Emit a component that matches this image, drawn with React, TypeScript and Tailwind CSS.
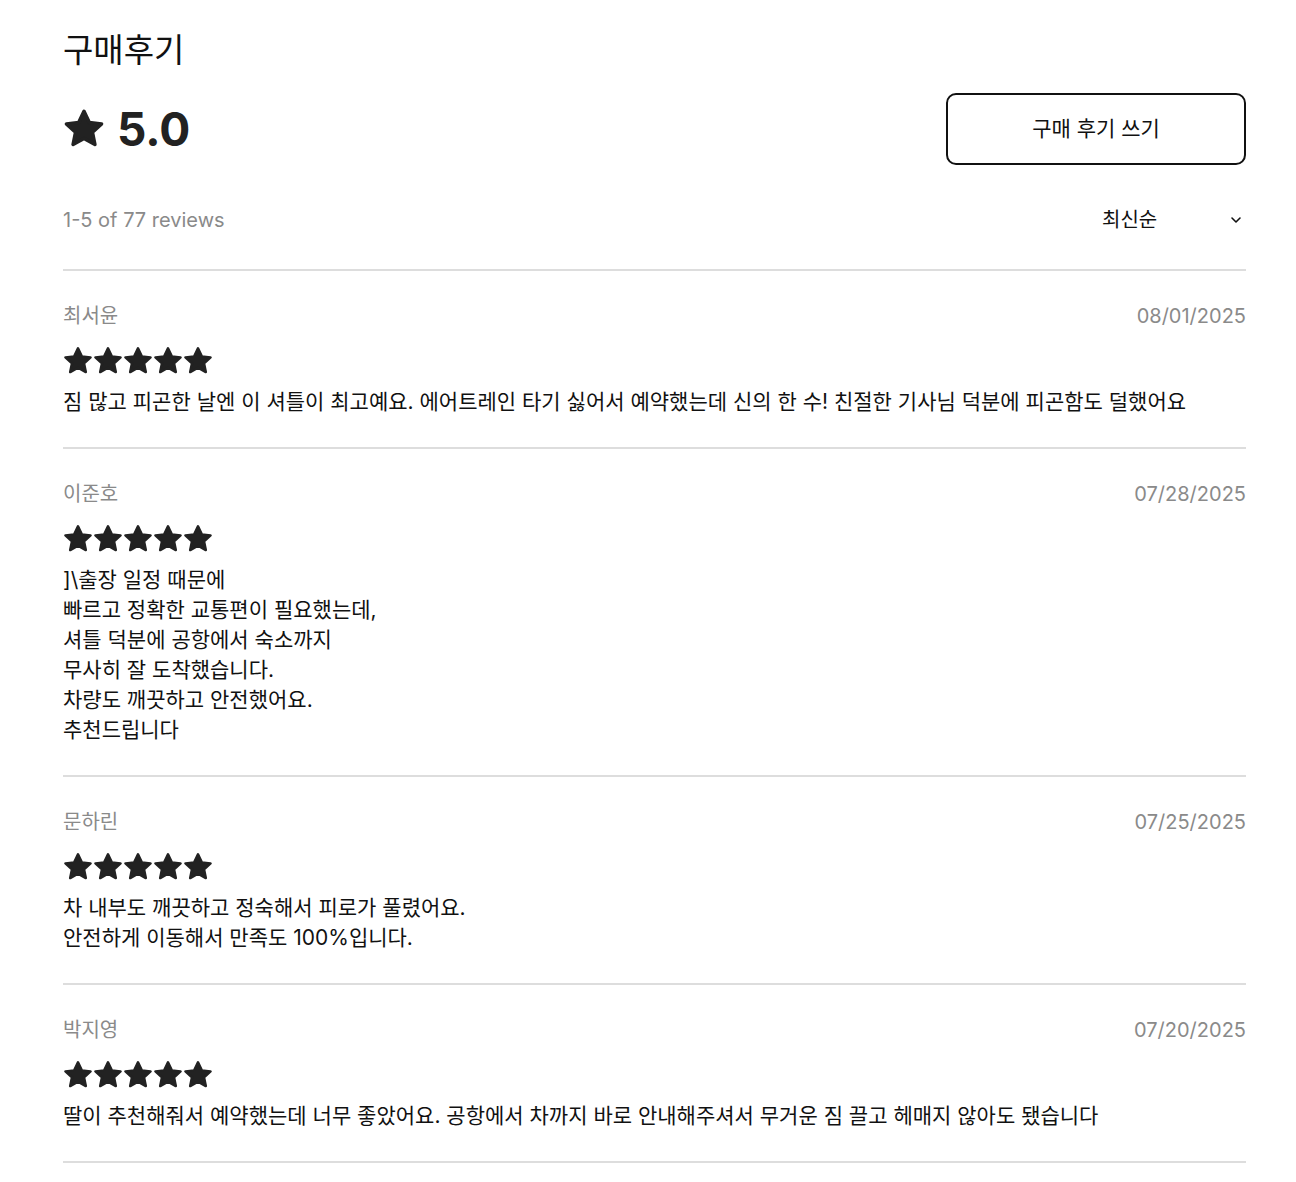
import React from "react";

type Review = {
  name: string;
  date: string;
  rating: number;
  body: string;
};

const reviews: Review[] = [
  {
    name: "최서윤",
    date: "08/01/2025",
    rating: 5,
    body: "짐 많고 피곤한 날엔 이 셔틀이 최고예요. 에어트레인 타기 싫어서 예약했는데 신의 한 수! 친절한 기사님 덕분에 피곤함도 덜했어요",
  },
  {
    name: "이준호",
    date: "07/28/2025",
    rating: 5,
    body: "]\\출장 일정 때문에\n빠르고 정확한 교통편이 필요했는데,\n셔틀 덕분에 공항에서 숙소까지\n무사히 잘 도착했습니다.\n차량도 깨끗하고 안전했어요.\n추천드립니다",
  },
  {
    name: "문하린",
    date: "07/25/2025",
    rating: 5,
    body: "차 내부도 깨끗하고 정숙해서 피로가 풀렸어요.\n안전하게 이동해서 만족도 100%입니다.",
  },
  {
    name: "박지영",
    date: "07/20/2025",
    rating: 5,
    body: "딸이 추천해줘서 예약했는데 너무 좋았어요. 공항에서 차까지 바로 안내해주셔서 무거운 짐 끌고 헤매지 않아도 됐습니다",
  },
];

const font = { fontFamily: 'Inter, "Noto Sans CJK KR", sans-serif' };

// rounded five-point star, nearly filling its box
const Star: React.FC<{ className?: string }> = ({ className }) => (
  <svg viewBox="0 0 24 24" className={className} fill="currentColor" stroke="currentColor" strokeWidth={2} strokeLinejoin="round">
    <path d="M12 1.9l3.05 6.4 7 .8-5.2 4.8 1.4 6.95L12 17.4l-6.25 3.45 1.4-6.95-5.2-4.8 7-.8z" />
  </svg>
);

export default function App() {
  return (
    <div className="min-h-screen bg-white text-[#1d1d1f]" style={font}>
      <section className="pl-[63px] pr-[50px] pt-[30px]">
        {/* Header */}
        <h2 className="text-[33px] leading-[40px] font-normal text-[#111]">구매후기</h2>

        <div className="mt-[23px] flex items-center justify-between">
          <div className="flex items-center gap-[12px]">
            <Star className="h-[42px] w-[42px] text-[#222]" />
            <span className="text-[46px] font-bold leading-none text-[#222]">5.0</span>
          </div>
          <button className="h-[72px] w-[300px] rounded-[10px] border-2 border-[#111] text-[21px] text-[#111]">
            구매 후기 쓰기
          </button>
        </div>

        <div className="mt-[41px] flex items-center justify-between">
          <span className="text-[20px] leading-[28px] text-[#8a8a8a]">1-5 of 77 reviews</span>
          <div className="flex w-[144px] items-center justify-between text-[20px] leading-[28px] text-[#111]">
            <span>최신순</span>
            <svg viewBox="0 0 24 24" className="mr-[2px] h-[16px] w-[16px]" fill="none" stroke="currentColor" strokeWidth={2.4} strokeLinecap="round" strokeLinejoin="round">
              <path d="M6 9l6 6 6-6" />
            </svg>
          </div>
        </div>

        <div className="mt-[35px] border-b-2 border-[#dddddd]" />

        {/* Reviews */}
        <ul>
          {reviews.map((r) => (
            <li key={r.name} className="border-b-2 border-[#dddddd] pt-[31px] pb-[30px]">
              <div className="flex items-center justify-between text-[20px] leading-[28px] text-[#8a8a8a]">
                <span>{r.name}</span>
                <span>{r.date}</span>
              </div>
              <div className="mt-[16px] flex text-[#222]">
                {Array.from({ length: r.rating }).map((_, i) => (
                  <Star key={i} className="h-[30px] w-[30px]" />
                ))}
              </div>
              <p className="mt-[11px] whitespace-pre-line text-[21px] leading-[30px] text-[#111]">{r.body}</p>
            </li>
          ))}
        </ul>
      </section>
    </div>
  );
}
